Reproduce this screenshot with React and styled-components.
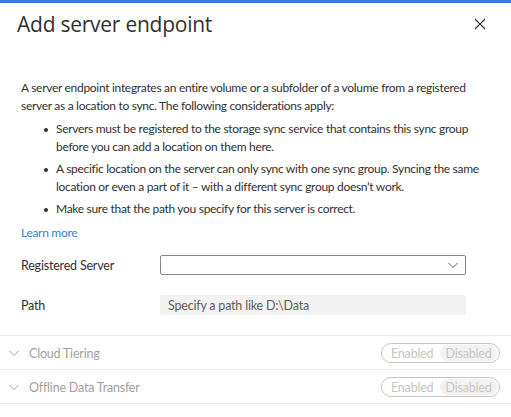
import React from "react";
import styled, { createGlobalStyle } from "styled-components";

const GlobalStyle = createGlobalStyle`
  html, body {
    margin: 0;
    padding: 0;
    background: #ffffff;
  }
  body {
    font-family: Lato, "Open Sans", "Liberation Sans", sans-serif;
    color: #323130;
  }
`;

const Panel = styled.div`
  width: 511px;
  height: 417px;
  overflow: hidden;
  border-top: 3px solid #3b78d8;
  box-sizing: border-box;
  background: #fff;
`;

const Header = styled.div`
  display: flex;
  align-items: center;
  justify-content: space-between;
  padding: 3px 25px 0 17px;
  height: 36px;
`;

const Title = styled.h1`
  margin: 0;
  font-family: "Open Sans", "Noto Sans", sans-serif;
  font-size: 21px;
  font-weight: 500;
  color: #323130;
  letter-spacing: -0.25px;
`;

const CloseButton = styled.button`
  border: 0;
  background: none;
  padding: 0;
  width: 12px;
  height: 12px;
  display: flex;
  align-items: center;
  justify-content: center;
  cursor: pointer;
`;

const Body = styled.div`
  padding: 37px 0 0 21px;
  font-size: 12px;
  line-height: 18px;
  letter-spacing: -0.3px;
  white-space: nowrap;
`;

const Intro = styled.p`
  margin: 0;
`;

const List = styled.ul`
  margin: 5px 0 0;
  padding: 0 0 0 35px;
  list-style: none;
`;

const Item = styled.li`
  position: relative;
  margin-bottom: 4px;
  &::before {
    content: "";
    position: absolute;
    left: -12px;
    top: 8px;
    width: 4px;
    height: 4px;
    border-radius: 50%;
    background: #323130;
  }
`;

const Link = styled.a`
  display: block;
  width: max-content;
  margin-top: 6px;
  color: #2f7fd6;
  text-decoration: none;
`;

const Form = styled.div`
  display: grid;
  grid-template-columns: 139px 306px;
  row-gap: 20px;
  align-items: center;
  margin-top: 13px;
  padding-left: 21px;
  font-size: 12.5px;
  letter-spacing: -0.2px;
`;

const Label = styled.div`
  color: #323130;
`;

const Select = styled.div`
  height: 20px;
  border: 1px solid #8a8886;
  border-radius: 2px;
  box-sizing: border-box;
  display: flex;
  align-items: center;
  justify-content: flex-end;
  padding-right: 6px;
`;

const PathInput = styled.div`
  height: 20px;
  background: #f3f2f1;
  border-radius: 2px;
  display: flex;
  align-items: center;
  padding-left: 8px;
  color: #605e5c;
`;

const Sections = styled.div`
  margin-top: 20px;
  border-top: 1px solid #edebe9;
`;

const SectionRow = styled.div`
  display: flex;
  align-items: center;
  height: 34px;
  padding: 1px 11px 0 8px;
  box-sizing: border-box;
  border-bottom: 1px solid #edebe9;
  font-size: 12.5px;
  letter-spacing: -0.2px;
  color: #a19f9d;
`;

const SectionTitle = styled.span`
  flex: 1;
  margin-left: 9px;
`;

const Toggle = styled.div`
  display: flex;
  align-items: center;
  width: 119px;
  height: 20px;
  box-sizing: border-box;
  border: 1px solid #c8c6c4;
  border-radius: 10px;
  padding: 1px 2px 1px 9px;
  color: #c8c6c4;
`;

const ToggleOption = styled.span`
  flex: ${(p) => (p.active ? "0 0 57px" : "1")};
  height: 100%;
  display: flex;
  align-items: center;
  justify-content: ${(p) => (p.active ? "center" : "flex-start")};
  border-radius: 9px;
  background: ${(p) => (p.active ? "#f3f2f1" : "transparent")};
`;

const Chevron = ({ color = "#605e5c", size = 12 }) => (
  <svg width={size} height={size} viewBox="0 0 12 12">
    <path d="M1.5 4 L6 8.5 L10.5 4" fill="none" stroke={color} strokeWidth="1" />
  </svg>
);

const Section = ({ title }) => (
  <SectionRow>
    <Chevron color="#a19f9d" size={12} />
    <SectionTitle>{title}</SectionTitle>
    <Toggle>
      <ToggleOption>Enabled</ToggleOption>
      <ToggleOption active>Disabled</ToggleOption>
    </Toggle>
  </SectionRow>
);

export default function App() {
  return (
    <>
      <GlobalStyle />
      <Panel>
        <Header>
          <Title>Add server endpoint</Title>
          <CloseButton aria-label="Close">
            <svg width="12" height="12" viewBox="0 0 12 12">
              <path d="M1 1 L11 11 M11 1 L1 11" stroke="#323130" strokeWidth="1.1" />
            </svg>
          </CloseButton>
        </Header>
        <Body>
          <Intro>
            A server endpoint integrates an entire volume or a subfolder of a volume from a registered
            <br />
            server as a location to sync. The following considerations apply:
          </Intro>
          <List>
            <Item>
              Servers must be registered to the storage sync service that contains this sync group
              <br />
              before you can add a location on them here.
            </Item>
            <Item>
              A specific location on the server can only sync with one sync group. Syncing the same
              <br />
              location or even a part of it – with a different sync group doesn’t work.
            </Item>
            <Item>Make sure that the path you specify for this server is correct.</Item>
          </List>
          <Link href="#">Learn more</Link>
        </Body>
        <Form>
          <Label>Registered Server</Label>
          <Select>
            <Chevron />
          </Select>
          <Label>Path</Label>
          <PathInput>Specify a path like D:\Data</PathInput>
        </Form>
        <Sections>
          <Section title="Cloud Tiering" />
          <Section title="Offline Data Transfer" />
        </Sections>
      </Panel>
    </>
  );
}
